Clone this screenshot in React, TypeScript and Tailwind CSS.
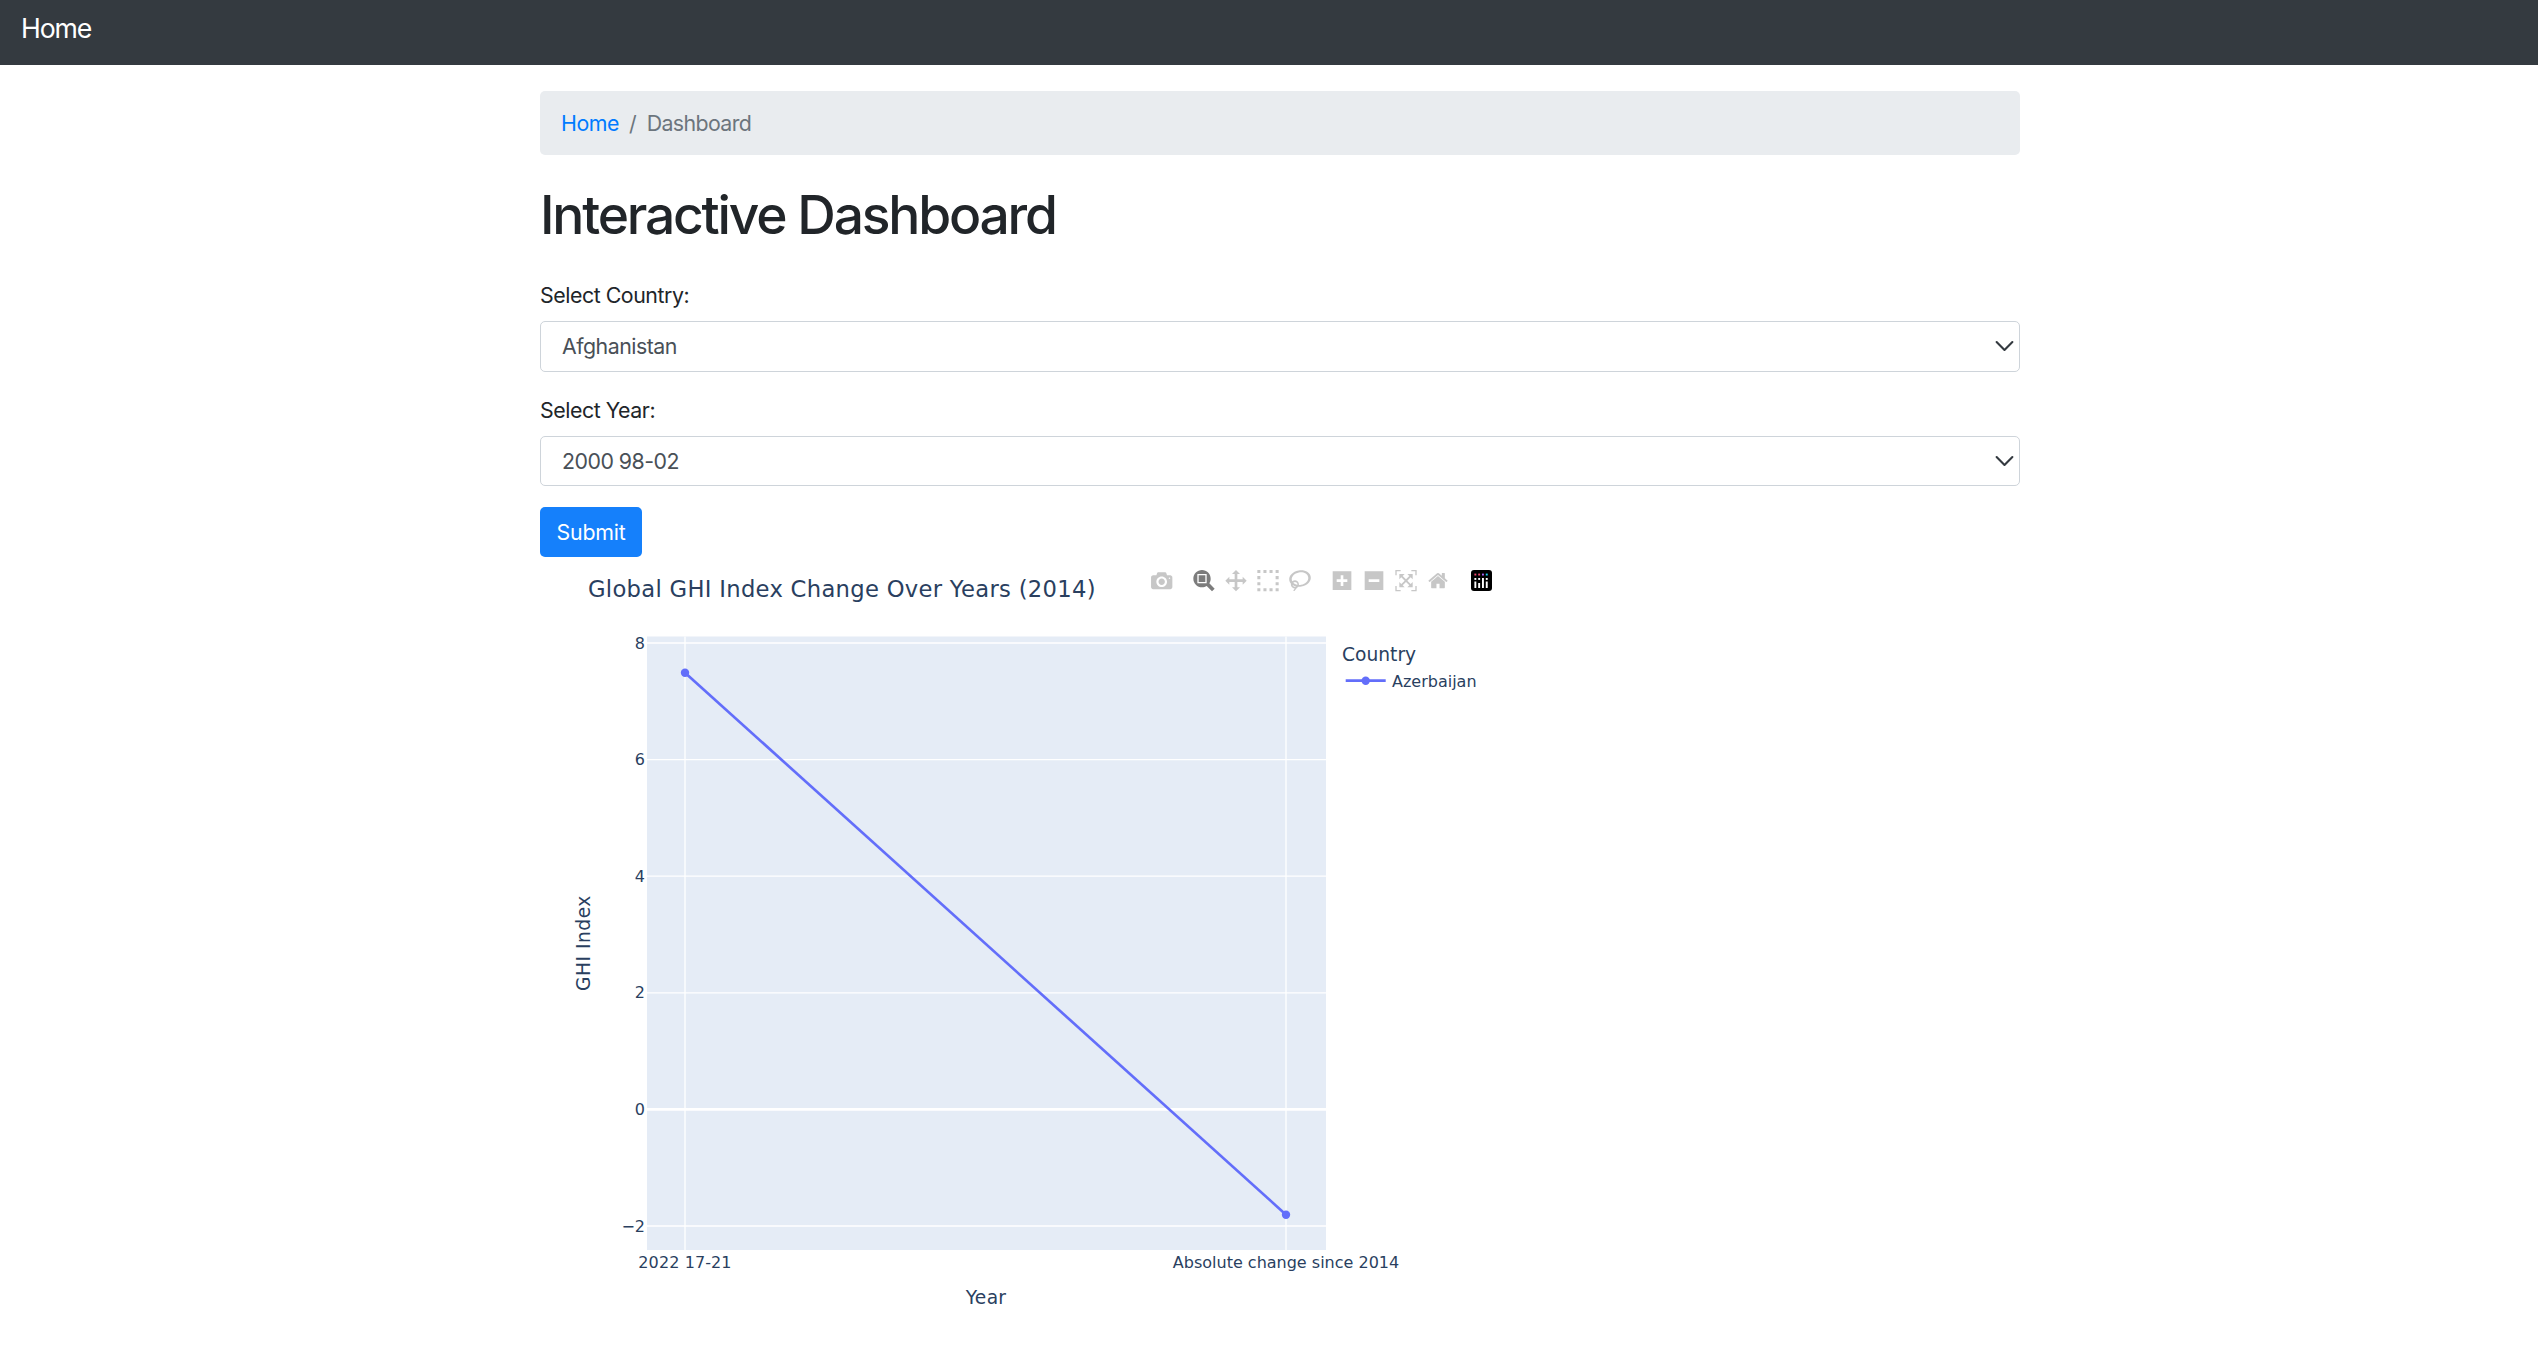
import React from "react";

const SANS = "font-['Inter','Liberation_Sans',sans-serif]";

function Chevron() {
  return (
    <svg className="absolute right-[5.5px] top-1/2 -translate-y-1/2 pointer-events-none" width="21" height="21" viewBox="0 0 16 16" fill="none">
      <path d="M2 5l6 6 6-6" stroke="#343a40" strokeWidth="1.6" strokeLinecap="round" strokeLinejoin="round" />
    </svg>
  );
}

function Field({ label, value }: { label: string; value: string }) {
  return (
    <div className="flex flex-col">
      <label className="h-[47px] pt-[5px] text-[21.33px] leading-[32px] tracking-[-0.45px] text-[#212529]">{label}</label>
      <div className="relative h-[50.5px]">
        <select
          defaultValue={value}
          className="w-full h-full appearance-none bg-white border-[1.33px] border-[#ced4da] rounded-[5px] pl-[21px] pr-[40px] pt-[2px] text-[21.33px] tracking-[-0.5px] text-[#495057] outline-none"
        >
          <option>{value}</option>
        </select>
        <Chevron />
      </div>
    </div>
  );
}

const GREY = "rgba(68,68,68,0.3)";
const DARK = "rgba(68,68,68,0.7)";

function Icon({ cx, d, w = 1000, fill = GREY }: { cx: number; d: string; w?: number; fill?: string }) {
  const s = 21.33 / 1000;
  const x = cx - (w * s) / 2;
  return (
    <g transform={`translate(${x} 570) scale(${s}) matrix(1 0 0 -1 0 850)`}>
      <path d={d} fill={fill} />
    </g>
  );
}

const AXIS = "#2a3f5f";
const FONT = "'DejaVu Sans', Verdana, sans-serif";
const yTicks: [string, number][] = [
  ["8", 643],
  ["6", 759.6],
  ["4", 876.2],
  ["2", 992.8],
  ["0", 1109.4],
  ["−2", 1226],
];

function Chart() {
  return (
    <svg className="block" width="1000" height="799" viewBox="540 557 1000 799" fontFamily={FONT}>
      <rect x="647" y="636.5" width="679" height="613.5" fill="#e5ecf6" />
      {[685, 1286].map((x) => (
        <line key={x} x1={x} x2={x} y1="636.5" y2="1250" stroke="#fff" strokeWidth="1.33" />
      ))}
      {yTicks.map(([t, y]) => (
        <g key={t}>
          <line x1="647" x2="1326" y1={y} y2={y} stroke="#fff" strokeWidth={t === "0" ? 2.67 : 1.33} />
          <text x="645" y={y + 5.6} textAnchor="end" fontSize="16" fill={AXIS}>{t}</text>
        </g>
      ))}
      <line x1="685" y1="672.7" x2="1286" y2="1214.7" stroke="#636efa" strokeWidth="2.67" />
      <circle cx="685" cy="672.7" r="4.2" fill="#636efa" />
      <circle cx="1286" cy="1214.7" r="4.2" fill="#636efa" />

      <text x="588" y="597" fontSize="22.67" letterSpacing="0.3" fill={AXIS}>Global GHI Index Change Over Years (2014)</text>
      <text x="685" y="1268" textAnchor="middle" fontSize="16" letterSpacing="0.1" fill={AXIS}>2022 17-21</text>
      <text x="1286" y="1268" textAnchor="middle" fontSize="16" fill={AXIS}>Absolute change since 2014</text>
      <text x="986" y="1303.5" textAnchor="middle" fontSize="18.67" letterSpacing="0.3" fill={AXIS}>Year</text>
      <text transform="translate(590 943) rotate(-90)" textAnchor="middle" fontSize="18.67" letterSpacing="0.5" fill={AXIS}>GHI Index</text>

      <text x="1342" y="661" fontSize="18.67" fill={AXIS}>Country</text>
      <line x1="1345.7" x2="1385.7" y1="680.7" y2="680.7" stroke="#636efa" strokeWidth="2.67" />
      <circle cx="1365.7" cy="680.7" r="4.2" fill="#636efa" />
      <text x="1392" y="687" fontSize="16" fill={AXIS}>Azerbaijan</text>

      <Icon cx={1161.7} d="M500 450c-83 0-150-67-150-150 0-83 67-150 150-150 83 0 150 67 150 150 0 83-67 150-150 150z m400 150h-120c-16 0-34 13-39 29l-31 93c-6 15-23 28-40 28h-340c-16 0-34-13-39-28l-31-94c-6-15-23-28-40-28h-120c-55 0-100-45-100-100v-450c0-55 45-100 100-100h800c55 0 100 45 100 100v450c0 55-45 100-100 100z m-400-550c-138 0-250 112-250 250 0 138 112 250 250 250 138 0 250-112 250-250 0-138-112-250-250-250z m365 380c-19 0-35 16-35 35 0 19 16 35 35 35 19 0 35-16 35-35 0-19-16-35-35-35z" />
      <Icon cx={1204} fill={DARK} d="m1000-25l-250 251c40 63 63 138 63 218 0 224-182 406-407 406-224 0-406-182-406-406s183-406 407-406c80 0 155 22 218 62l250-250 125 125z m-812 250l0 438 437 0 0-438-437 0z m62 375l313 0 0-312-313 0 0 312z" />
      <Icon cx={1236} d="m1000 350l-187 188 0-125-250 0 0 250 125 0-188 187-187-187 125 0 0-250-250 0 0 125-188-188 186-187 0 125 252 0 0-250-125 0 187-188 188 188-125 0 0 250 250 0 0-126 187 188z" />
      <Icon cx={1268} d="M0 850l0-143 143 0 0 143-143 0z m286 0l0-143 143 0 0 143-143 0z m285 0l0-143 143 0 0 143-143 0z m286 0l0-143 143 0 0 143-143 0z m-857-286l0-143 143 0 0 143-143 0z m857 0l0-143 143 0 0 143-143 0z m-857-285l0-143 143 0 0 143-143 0z m857 0l0-143 143 0 0 143-143 0z m-857-286l0-143 143 0 0 143-143 0z m286 0l0-143 143 0 0 143-143 0z m285 0l0-143 143 0 0 143-143 0z m286 0l0-143 143 0 0 143-143 0z" />
      <Icon cx={1300} w={1031} d="m1018 538c-36 207-290 336-568 286-277-48-473-256-436-463 10-57 36-108 76-151-13-66 11-137 68-183 34-28 75-41 114-42l-55-70 0 0c-2-1-3-2-4-3-10-14-8-34 5-45 14-11 34-8 45 4 1 1 2 3 2 5l0 0 113 140c16 11 31 24 45 40 4 3 6 7 8 11 48-3 100 0 151 9 278 48 473 255 436 462z m-624-379c-80 14-149 48-197 96 42 42 109 47 156 9 33-26 47-66 41-105z m-187-74c-19 16-33 37-39 60 50-32 109-55 174-68-42-25-95-24-135 8z m360 75c-34-7-69-9-102-8 8 62-16 128-68 170-73 59-175 54-244-5-9 20-16 40-20 61-28 159 121 317 333 354s407-60 434-217c28-159-121-318-333-355z" />
      <Icon cx={1342} w={875} d="m1 787l0-875 875 0 0 875-875 0z m687-500l-187 0 0-187-125 0 0 187-188 0 0 125 188 0 0 187 125 0 0-187 187 0 0-125z" />
      <Icon cx={1374} w={875} d="m0 788l0-876 875 0 0 876-875 0z m688-500l-500 0 0 125 500 0 0-125z" />
      <Icon cx={1406} d="m250 850l-187 0-63 0 0-62 0-188 63 0 0 188 187 0 0 62z m688 0l-188 0 0-62 188 0 0-188 62 0 0 188 0 62-62 0z m-875-938l0 188-63 0 0-188 0-62 63 0 187 0 0 62-187 0z m875 188l0-188-188 0 0-62 188 0 62 0 0 62 0 188-62 0z m-125 188l-1 0-93-94-156 156 156 156 92-93 2 0 0 250-250 0 0-2 93-92-156-156-156 156 94 92 0 2-250 0 0-250 0 0 93 93 157-156-157-156-93 94 0 0 0-250 250 0 0 0-94 93 156 157 156-157-93-93 0 0 250 0 0 250z" />
      <Icon cx={1438} w={928.6} d="m786 296v-267q0-15-11-26t-25-10h-214v214h-143v-214h-214q-15 0-25 10t-11 26v267q0 1 0 2t0 2l321 264 321-264q1-1 1-4z m124 39l-34-41q-5-5-12-6h-2q-7 0-12 3l-386 322-386-322q-7-4-13-4-7 2-12 7l-35 41q-4 5-3 13t6 12l401 334q18 15 42 15t43-15l136-114v109q0 8 5 13t13 5h107q8 0 13-5t5-13v-227l122-102q5-5 6-12t-4-13z" />

      <rect x="1471" y="570" width="21" height="21" rx="3" fill="#000" />
      <g fill="#fff">
        <rect x="1474.4" y="578" width="1.9" height="1.9" />
        <rect x="1474.4" y="581.5" width="1.9" height="6.5" />
        <rect x="1478.2" y="583" width="1.9" height="5" />
        <rect x="1478.2" y="578" width="1.9" height="1.9" />
        <rect x="1482" y="578" width="1.9" height="10" />
        <rect x="1485.8" y="578" width="1.9" height="1.9" />
        <rect x="1485.8" y="581.5" width="1.9" height="6.5" />
      </g>
      <rect x="1474.4" y="573.6" width="1.9" height="1.9" fill="#ef476f" />
      <rect x="1478.2" y="573.6" width="1.9" height="1.9" fill="#ef476f" />
      <rect x="1482" y="573.6" width="1.9" height="1.9" fill="#ab63fa" />
      <rect x="1485.8" y="573.6" width="1.9" height="1.9" fill="#19d3f3" />
    </svg>
  );
}

export default function App() {
  return (
    <div className={`bg-white h-[1356px] overflow-hidden ${SANS}`}>
      <nav className="h-[65px] bg-[#343a40] flex items-start pl-[21px] pt-[10px]">
        <span className="text-[26.67px] leading-[36px] tracking-[-1.1px] text-white">Home</span>
      </nav>
      <main className="ml-[540px] w-[1480px]">
        <div className="mt-[26px] h-[64px] bg-[#e9ecef] rounded-[5px] flex items-center px-[21px] pt-[2px] text-[21.33px]">
          <a className="text-[#007bff] tracking-[-0.45px]">Home</a>
          <span className="px-[10px] text-[#6c757d]">/</span>
          <span className="text-[#6c757d] tracking-[-0.6px]">Dashboard</span>
        </div>
        <h1 className="mt-[28px] text-[53.33px] leading-[64px] font-medium tracking-[-2.2px] text-[#212529]">Interactive Dashboard</h1>
        <div className="mt-[27px]">
          <Field label="Select Country:" value="Afghanistan" />
        </div>
        <div className="mt-[17px]">
          <Field label="Select Year:" value="2000 98-02" />
        </div>
        <button className="mt-[21px] block w-[102px] h-[50px] pt-[1px] bg-[#1580fb] rounded-[5px] text-white text-[21.33px] leading-none tracking-[-0.2px]">Submit</button>
        <Chart />
      </main>
    </div>
  );
}
